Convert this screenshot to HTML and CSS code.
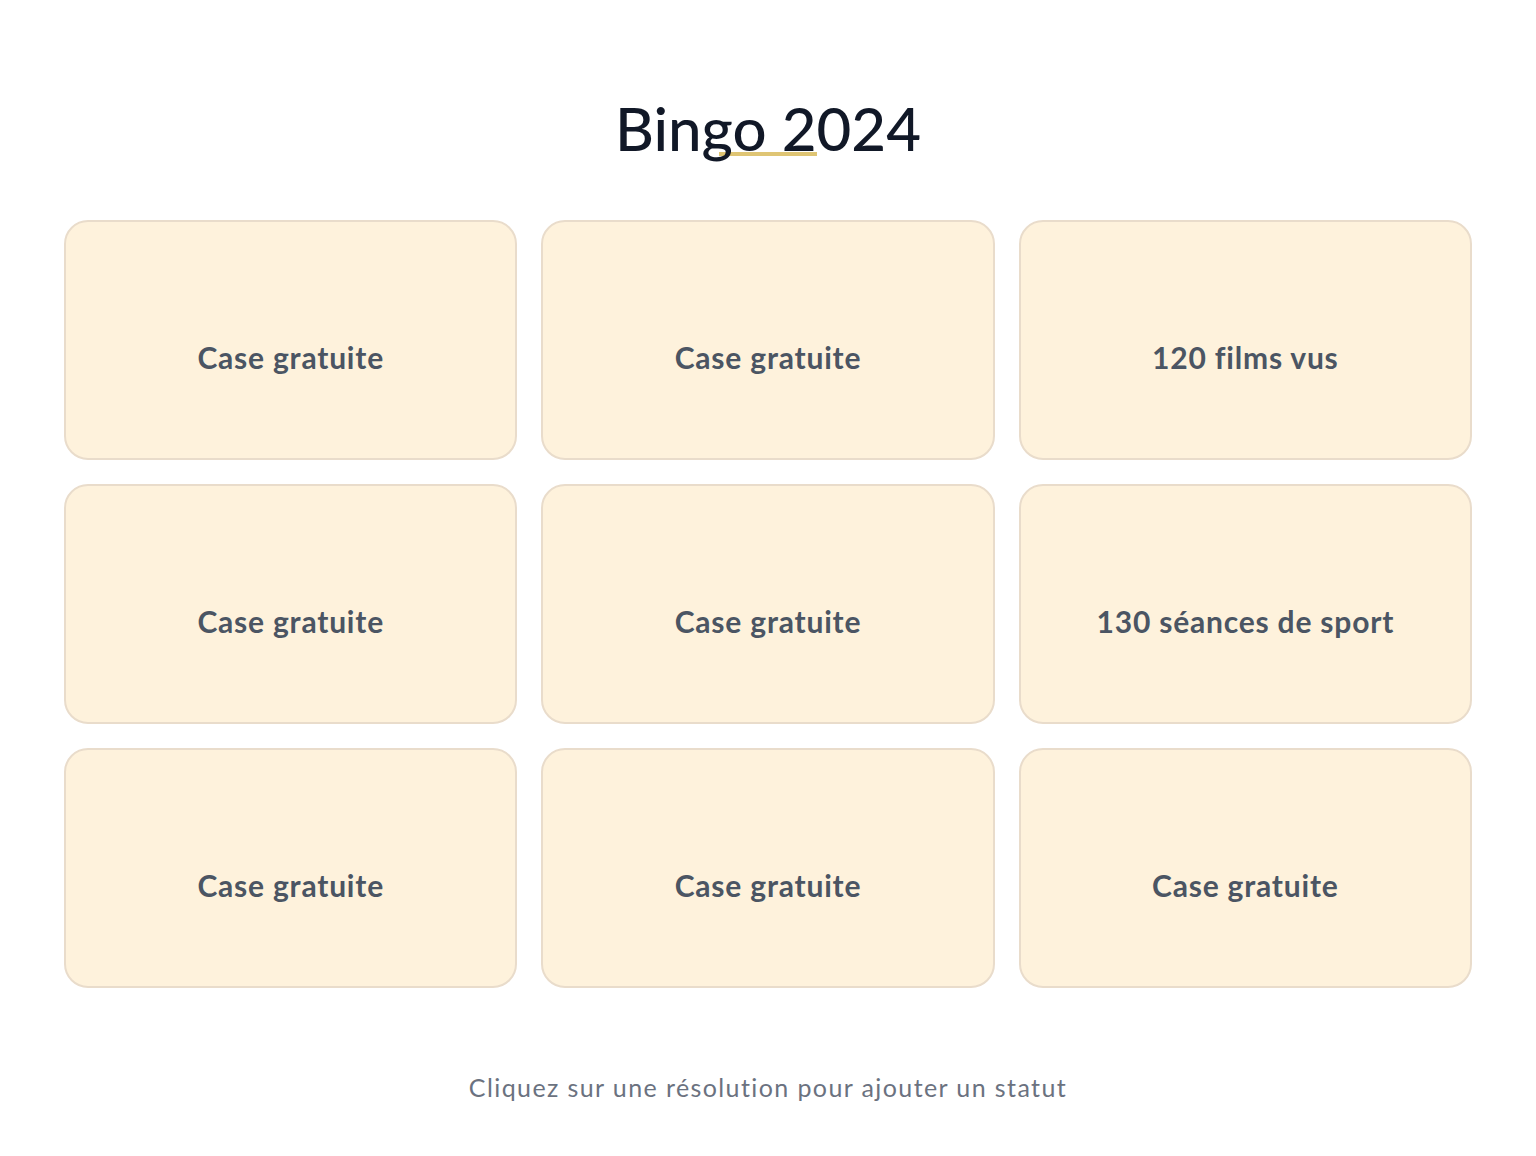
FILE: index.html
```html
<!DOCTYPE html>
<html lang="fr">
<head>
<meta charset="utf-8">
<title>Bingo 2024</title>
<link rel="stylesheet" href="styles.css">
</head>
<body>
<main class="page">
  <h1 class="title"><span class="title-text">Bingo 2024<span class="title-underline"></span></span></h1>
  <div class="grid">
    <button class="cell">Case gratuite</button>
    <button class="cell">Case gratuite</button>
    <button class="cell">120 films vus</button>
    <button class="cell">Case gratuite</button>
    <button class="cell">Case gratuite</button>
    <button class="cell">130 séances de sport</button>
    <button class="cell">Case gratuite</button>
    <button class="cell">Case gratuite</button>
    <button class="cell">Case gratuite</button>
  </div>
  <p class="hint">Cliquez sur une résolution pour ajouter un statut</p>
</main>
</body>
</html>
```
FILE: styles.css
```css
* { box-sizing: border-box; }
html, body { margin: 0; padding: 0; background: #ffffff; }
body {
  font-family: "Lato", "Noto Sans", sans-serif;
  color: #111827;
}
.page {
  padding: 96px 64px 40px;
  display: flex;
  flex-direction: column;
  align-items: stretch;
}
.title {
  margin: 0;
  text-align: center;
  font-size: 60px;
  line-height: 64px;
  font-weight: 500;
  color: #111827;
}
.title-text {
  position: relative;
  display: inline-block;
  isolation: isolate;
}
.title-underline {
  position: absolute;
  left: 34%;
  width: 32%;
  bottom: 4px;
  height: 4px;
  background: #dfc574;
  z-index: -1;
}
.grid {
  margin-top: 60px;
  display: grid;
  grid-template-columns: repeat(3, 1fr);
  grid-auto-rows: 240px;
  gap: 24px;
}
.cell {
  font-family: inherit;
  background: #fef2dc;
  border: 2px solid #e9dccb;
  border-radius: 24px;
  font-size: 30px;
  font-weight: 700;
  letter-spacing: 0.8px;
  color: #4b5563;
  display: flex;
  align-items: center;
  justify-content: center;
  cursor: pointer;
  padding: 34px 16px 0;
}
.hint {
  margin: 84px 0 0;
  text-align: center;
  font-size: 25px;
  line-height: 30px;
  letter-spacing: 1.4px;
  color: #6b7280;
}
```
